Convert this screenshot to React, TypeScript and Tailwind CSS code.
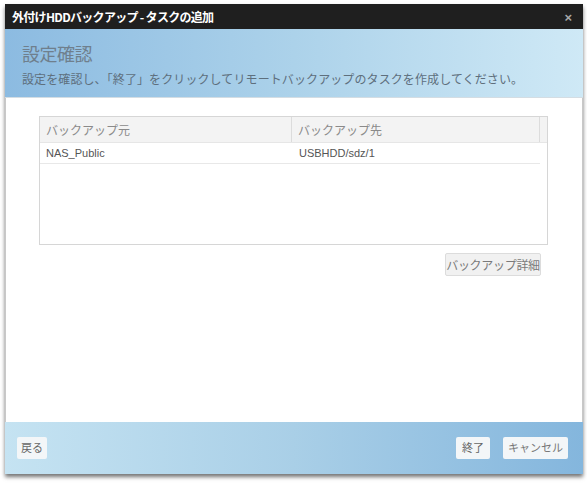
import React from "react";

const jp = { fontFamily: '"Noto Sans CJK JP", "Noto Sans", sans-serif' };
const arial = { fontFamily: '"Liberation Sans", "Noto Sans CJK JP", sans-serif' };

export default function App() {
  return (
    <div className="w-[587px] h-[483px] bg-white pl-[5px] pt-[4px]" style={jp}>
      <div className="w-[578px] h-[470px] flex flex-col shadow-[0_3px_4px_rgba(0,0,0,0.55)]">
        {/* Title bar */}
        <div className="h-[25px] bg-[#1f1f1f] flex items-center justify-between pl-[7px] pr-[11px]">
          <span className="text-white text-[12px] font-bold tracking-[-0.7px] leading-none">
            外付けHDDバックアップ - タスクの追加
          </span>
          <span className="text-[#a8a8a8] text-[13px] font-bold leading-none mt-[1px]" style={arial}>×</span>
        </div>
        {/* Header */}
        <div className="h-[69px] bg-gradient-to-r from-[#8cbbe1] via-[#acd2ea] to-[#cfe9f6] border-b border-[#d4dde3] pl-[17px] pt-[12px]">
          <div className="text-[18px] leading-[24px] text-[#6f7f8d] tracking-[-0.5px]">設定確認</div>
          <div className="mt-[6px] text-[12px] leading-[16px] text-[#5e6f7d] tracking-[0.1px]">
            設定を確認し、「終了」をクリックしてリモートバックアップのタスクを作成してください。
          </div>
        </div>
        {/* Body */}
        <div className="flex-1 bg-white border-x border-[#c8c8c8] pt-[18px] pl-[33px] pr-[34px]">
          <div className="w-[509px] h-[129px] border border-[#d6d6d6] flex flex-col">
            <div className="h-[26px] flex bg-[#f3f3f3] border-b border-[#e6e6e6]">
              <div className="w-[252px] border-r border-[#dcdcdc] flex items-center pl-[6px] text-[12px] text-[#8a8a8a]">
                バックアップ元
              </div>
              <div className="w-[248px] border-r border-[#dcdcdc] flex items-center pl-[6px] text-[12px] text-[#8a8a8a]">
                バックアップ先
              </div>
              <div className="flex-1" />
            </div>
            <div className="h-[21px] w-[500px] flex border-b border-[#e8e8e8] text-[11px] text-[#555]" style={arial}>
              <div className="w-[252px] flex items-center pl-[6px]">NAS_Public</div>
              <div className="flex-1 flex items-center pl-[7px]">USBHDD/sdz/1</div>
            </div>
          </div>
          <div className="w-[509px] flex justify-end pr-[7px] mt-[8px]">
            <div className="w-[96px] h-[23px] bg-[#f1f1f1] border border-[#dcdcdc] rounded-[2px] flex items-center justify-center text-[12px] text-[#7a7a7a] tracking-[-0.3px]">
              バックアップ詳細
            </div>
          </div>
        </div>
        {/* Footer */}
        <div className="h-[52px] bg-gradient-to-r from-[#c5e3f2] via-[#a9cfe7] to-[#84b6dd] flex items-center justify-between pl-[12px] pr-[15px] pb-[1px]">
          <div className="w-[30px] h-[22px] bg-[#f3f6f8] rounded-[2px] flex items-center justify-center text-[11px] text-[#666]">
            戻る
          </div>
          <div className="flex gap-[13px]">
            <div className="w-[34px] h-[22px] bg-[#f3f6f8] rounded-[2px] flex items-center justify-center text-[11px] text-[#666]">
              終了
            </div>
            <div className="w-[65px] h-[22px] bg-[#f3f6f8] rounded-[2px] flex items-center justify-center text-[11px] text-[#777]">
              キャンセル
            </div>
          </div>
        </div>
      </div>
    </div>
  );
}
